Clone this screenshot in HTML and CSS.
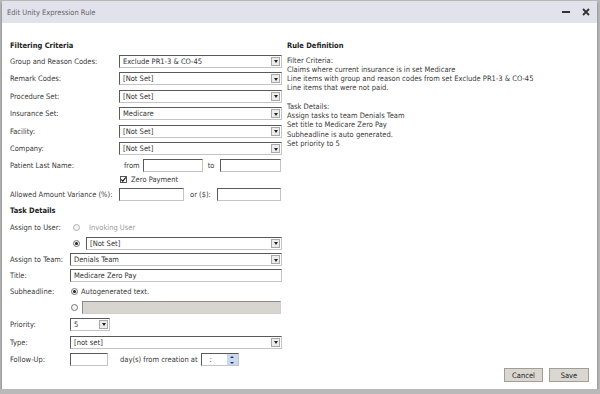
FILE: index.html
```html
<!DOCTYPE html>
<html lang="en">
<head>
    <meta charset="UTF-8">
    <title>Edit Unity Expression Rule</title>
    <link rel="stylesheet" href="styles.css">
</head>
<body>
    <div class="dialog">
        <div class="titlebar">
            <span class="title">Edit Unity Expression Rule</span>
            <span class="tools">
                <span class="minimize"></span>
                <svg class="close" width="8" height="8" viewBox="0 0 8 8"><path d="M1 1 L7 7 M7 1 L1 7" stroke="#333" stroke-width="1.8"/></svg>
            </span>
        </div>

        <div class="content">
            <!-- Left: form -->
            <div class="form">
                <div class="row head">Filtering Criteria</div>
                <div class="row filter"><label>Group and Reason Codes:</label><span class="field select wide"><span>Exclude PR1-3 &amp; CO-45</span><i class="arrow"></i></span></div>
                <div class="row filter"><label>Remark Codes:</label><span class="field select wide"><span>[Not Set]</span><i class="arrow"></i></span></div>
                <div class="row filter"><label>Procedure Set:</label><span class="field select wide"><span>[Not Set]</span><i class="arrow"></i></span></div>
                <div class="row filter"><label>Insurance Set:</label><span class="field select wide"><span>Medicare</span><i class="arrow"></i></span></div>
                <div class="row filter"><label>Facility:</label><span class="field select wide"><span>[Not Set]</span><i class="arrow"></i></span></div>
                <div class="row filter"><label>Company:</label><span class="field select wide"><span>[Not Set]</span><i class="arrow"></i></span></div>
                <div class="row patient">
                    <label>Patient Last Name:</label>
                    <span class="inline from">from</span><span class="field w60"></span>
                    <span class="inline to">to</span><span class="field w61"></span>
                </div>
                <div class="row zero">
                    <label></label>
                    <span class="check"><svg width="7" height="7" viewBox="0 0 7 7"><path d="M1.2 3.4 L2.8 5.2 L5.8 1.4" stroke="#222" stroke-width="1.2" fill="none"/></svg></span>
                    <span>Zero Payment</span>
                </div>
                <div class="row allowed">
                    <label>Allowed Amount Variance (%):</label>
                    <span class="field w65"></span>
                    <span class="inline or">or ($):</span><span class="field w64"></span>
                </div>

                <div class="row head task-head">Task Details</div>
                <div class="row r16"><label class="short">Assign to User:</label><span class="radio faded"></span><span class="muted">Invoking User</span></div>
                <div class="row r16"><label class="short"></label><span class="radio on pick"></span><span class="field select notset"><span>[Not Set]</span><i class="arrow"></i></span></div>
                <div class="row r17"><label class="short">Assign to Team:</label><span class="field select full"><span>Denials Team</span><i class="arrow"></i></span></div>
                <div class="row r15"><label class="short">Title:</label><span class="field full"><span>Medicare Zero Pay</span></span></div>
                <div class="row r15"><label class="short">Subheadline:</label><span class="radio on sub"></span><span>Autogenerated text.</span></div>
                <div class="row r16"><label class="short"></label><span class="radio sub"></span><span class="field disabled"></span></div>
                <div class="row r18"><label class="short">Priority:</label><span class="field select w40"><span>5</span><i class="arrow"></i></span></div>
                <div class="row r18"><label class="short">Type:</label><span class="field select full"><span>[not set]</span><i class="arrow"></i></span></div>
                <div class="row r17"><label class="short">Follow-Up:</label><span class="field w38"></span>
                    <span class="inline days">day(s) from creation at</span>
                    <span class="field time"><span>:</span><i class="spin"></i></span>
                </div>
            </div>

            <!-- Right: summary -->
            <div class="summary">
                <div class="row head">Rule Definition</div>
                <div class="lines">
                    <p>Filter Criteria:</p>
                    <p>Claims where current insurance is in set Medicare</p>
                    <p>Line items with group and reason codes from set Exclude PR1-3 &amp; CO-45</p>
                    <p>Line items that were not paid.</p>
                    <p>&nbsp;</p>
                    <p>Task Details:</p>
                    <p>Assign tasks to team Denials Team</p>
                    <p>Set title to Medicare Zero Pay</p>
                    <p>Subheadline is auto generated.</p>
                    <p>Set priority to 5</p>
                </div>
            </div>
        </div>

        <div class="footer">
            <button class="btn cancel">Cancel</button>
            <button class="btn save">Save</button>
        </div>
    </div>
</body>
</html>
```

FILE: styles.css
```css
body {
    margin: 0;
    background: #b9b9b9;
    font-family: "DejaVu Sans Condensed", "DejaVu Sans", sans-serif;
    font-size: 7.5px;
    color: #3a3a3a;
}
.dialog {
    margin: 1px 3px 0 2px;
    height: 388px;
    background: #fff;
    display: flex;
    flex-direction: column;
    box-shadow: 0 2px 3px rgba(0, 0, 0, 0.35);
}
.titlebar {
    height: 22px;
    background: #e1e2ec;
    display: flex;
    align-items: center;
    justify-content: space-between;
    padding: 0 7px 0 5px;
}
.title {
    color: #666;
}
.tools {
    display: flex;
    align-items: center;
    gap: 12px;
}
.minimize {
    width: 8px;
    height: 2px;
    background: #333;
}
.content {
    flex: 1;
    display: flex;
    padding: 15px 0 0 8px;
}
.form {
    width: 272px;
}
.summary {
    margin-left: 5px;
}
.row {
    display: flex;
    align-items: center;
    height: 17.5px;
    white-space: nowrap;
}
.row.head {
    height: 14.5px;
    font-weight: bold;
    color: #222;
}
.row.task-head {
    height: 16.5px;
}
.row.patient { height: 15px; }
.row.zero { height: 14.5px; }
.row.allowed { height: 15.5px; }
.row.r15 { height: 15.5px; }
.row.r16 { height: 16px; }
.row.r17 { height: 17px; }
.row.r18 { height: 18px; }
.row label {
    width: 109px;
    flex-shrink: 0;
}
.row label.short {
    width: 60px;
}
.field {
    box-sizing: border-box;
    height: 13px;
    border: 1px solid;
    border-color: #5a5a5a #c4c4c4 #c4c4c4 #5a5a5a;
    background: #fff;
    display: flex;
    align-items: center;
    padding-left: 3px;
    color: #333;
    flex-shrink: 0;
}
.field.wide { width: 163px; }
.field.full { width: 212px; }
.field.notset { width: 196px; }
.field.w60 { width: 60px; }
.field.w61 { width: 61px; }
.field.w65 { width: 65px; }
.field.w64 { width: 64px; }
.field.w40 { width: 40px; }
.field.w38 { width: 38px; }
.field.disabled {
    width: 199px;
    background: #d8d5d0;
    border-color: #8a8a8a #d0d0d0 #d0d0d0 #8a8a8a;
}
.arrow {
    margin-left: auto;
    margin-right: 1px;
    width: 9px;
    height: 9px;
    box-sizing: border-box;
    border: 1px solid #a8a8a8;
    background: #ececec;
    position: relative;
}
.arrow:after {
    content: "";
    position: absolute;
    left: 1.5px;
    top: 2.5px;
    border-left: 2.5px solid transparent;
    border-right: 2.5px solid transparent;
    border-top: 3px solid #222;
}
.inline.from { margin-left: 5px; margin-right: 3px; }
.inline.to { margin-left: 5px; margin-right: 6px; }
.inline.or { margin-left: 6px; margin-right: 6px; }
.inline.days { margin-left: 12px; margin-right: 3px; }
.check {
    width: 7px;
    height: 7px;
    box-sizing: border-box;
    border: 1px solid #555;
    margin: 0 4px 0 1px;
    display: flex;
}
.check svg {
    margin: -1px;
}
.radio {
    width: 7px;
    height: 7px;
    box-sizing: border-box;
    border: 1px solid #777;
    border-radius: 50%;
    margin-left: 2px;
    position: relative;
    background: #f4f4f4;
    flex-shrink: 0;
}
.radio.faded {
    border-color: #b0b0b0;
    margin-left: 3px;
    margin-right: 9px;
}
.radio.pick {
    margin-left: 3px;
    margin-right: 6px;
}
.radio.on:after {
    content: "";
    position: absolute;
    left: 1px;
    top: 1px;
    width: 3px;
    height: 3px;
    border-radius: 50%;
    background: #222;
}
.radio.sub {
    margin-left: 1px;
    margin-right: 3px;
}
.radio.sub + .field.disabled {
    margin-left: 1px;
}
.muted {
    color: #9a9a9a;
}
.field.time {
    width: 38px;
    padding-left: 8px;
}
.spin {
    margin-left: auto;
    width: 11px;
    height: 11px;
    background: #c8daf0;
    position: relative;
}
.spin:before, .spin:after {
    content: "";
    position: absolute;
    left: 3px;
    border-left: 2.5px solid transparent;
    border-right: 2.5px solid transparent;
}
.spin:before {
    top: 1.5px;
    border-bottom: 2.5px solid #335;
}
.spin:after {
    bottom: 1.5px;
    border-top: 2.5px solid #335;
}
.lines {
    margin-top: 3px;
}
.lines p {
    margin: 0;
    line-height: 9.25px;
}
.footer {
    display: flex;
    justify-content: flex-end;
    gap: 6px;
    padding: 0 8px 7px 0;
}
.btn {
    height: 14px;
    width: 40px;
    padding: 0;
    background: #dad7d1;
    border: 1px solid #a19e98;
    font-family: inherit;
    font-size: 7.5px;
    color: #222;
}
.btn.cancel {
    width: 39px;
}
```
